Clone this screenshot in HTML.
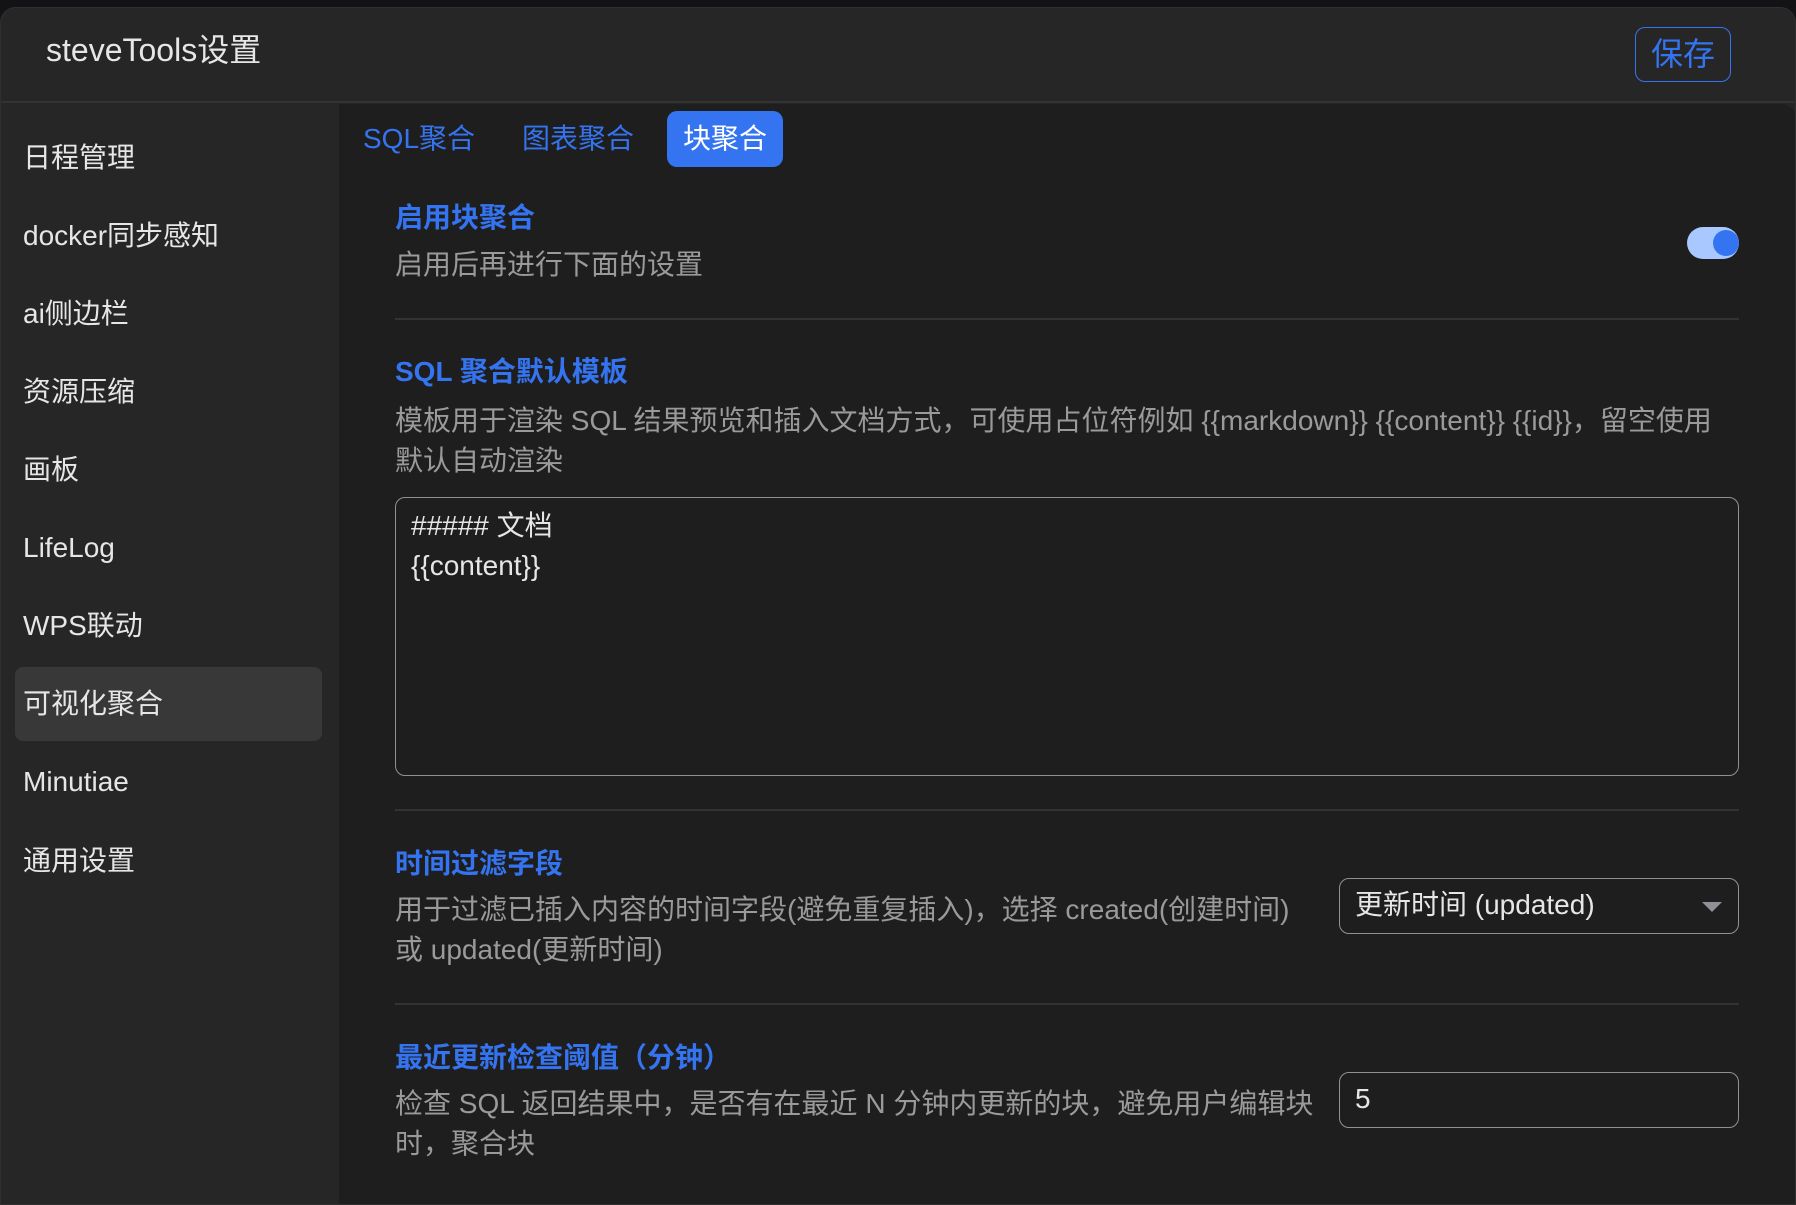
<!DOCTYPE html>
<html><head><meta charset="utf-8"><style>
*{box-sizing:border-box;margin:0;padding:0}
body{width:1796px;height:1205px;background:#131316;font-family:"Liberation Sans","Noto Sans CJK SC",sans-serif;overflow:hidden;position:relative}
.win{position:absolute;left:0;top:7px;width:1796px;height:1198px;background:#262626;border-radius:16px 16px 0 0;border:1px solid #303030;overflow:hidden}
.hdr{position:absolute;left:0;top:0;width:100%;height:95px;border-bottom:2px solid #333}
.title{position:absolute;left:45px;top:17px;font-size:32px;color:#e6e6e6}
.save{position:absolute;left:1634px;top:19px;width:96px;height:55px;border:1.5px solid #3574f0;border-radius:10px;color:#3574f0;font-size:32px;text-align:center;line-height:52px}
.side{position:absolute;left:0;top:96px;width:338px;height:1110px;background:#262626}
.item{position:absolute;left:22px;font-size:28px;color:#e6e6e6;height:40px;line-height:40px}
.act{position:absolute;left:14px;top:563px;width:307px;height:74px;background:#383838;border-radius:8px}
.main{position:absolute;left:338px;top:96px;width:1458px;height:1110px;background:#1e1e1e;border-radius:0 16px 0 0}
.tab{position:absolute;top:7px;height:56px;line-height:56px;font-size:28px;color:#3574f0}
.tab.on{background:#3574f0;color:#fff;border-radius:10px;padding:0 16px}
.h{position:absolute;left:56px;font-size:28px;font-weight:bold;color:#3574f0}
.d{position:absolute;left:56px;font-size:28px;color:#9a9a9a;line-height:40px;white-space:nowrap}
.hr{position:absolute;left:56px;width:1344px;height:2px;background:#333}
.box{position:absolute;border:1.5px solid #8e9296;border-radius:10px;color:#e6e6e6;font-size:28px}
</style></head><body>
<div class="win">
<div class="hdr"><div class="title">steveTools设置</div><div class="save">保存</div></div>
<div class="side">
<div class="act"></div>
<div class="item" style="top:34px">日程管理</div>
<div class="item" style="top:112px">docker同步感知</div>
<div class="item" style="top:190px">ai侧边栏</div>
<div class="item" style="top:268px">资源压缩</div>
<div class="item" style="top:346px">画板</div>
<div class="item" style="top:424px">LifeLog</div>
<div class="item" style="top:502px">WPS联动</div>
<div class="item" style="top:580px">可视化聚合</div>
<div class="item" style="top:658px">Minutiae</div>
<div class="item" style="top:737px">通用设置</div>
</div>
<div class="main">
<div class="tab" style="left:24px">SQL聚合</div>
<div class="tab" style="left:183px">图表聚合</div>
<div class="tab on" style="left:328px">块聚合</div>
<div class="h" style="top:92px">启用块聚合</div>
<div class="d" style="top:141px">启用后再进行下面的设置</div>
<div style="position:absolute;left:1348px;top:123px;width:52px;height:32px;border-radius:16px;background:#a8c8ff"></div>
<div style="position:absolute;left:1374px;top:126px;width:26px;height:26px;border-radius:50%;background:#3574f0"></div>
<div class="hr" style="top:214px"></div>
<div class="h" style="top:246px">SQL 聚合默认模板</div>
<div class="d" style="top:297px">模板用于渲染 SQL 结果预览和插入文档方式，可使用占位符例如 {{markdown}} {{content}} {{id}}，留空使用<br>默认自动渲染</div>
<div class="box" style="left:56px;top:393px;width:1344px;height:279px;padding:8px 15px;line-height:40px">##### 文档<br>{{content}}</div>
<div class="hr" style="top:705px"></div>
<div class="h" style="top:738px">时间过滤字段</div>
<div class="d" style="top:786px">用于过滤已插入内容的时间字段(避免重复插入)，选择 created(创建时间)<br>或 updated(更新时间)</div>
<div class="box" style="left:1000px;top:774px;width:400px;height:56px;padding:0 15px;line-height:52px">更新时间 (updated)
<div style="position:absolute;right:16px;top:23px;width:0;height:0;border-left:10px solid transparent;border-right:10px solid transparent;border-top:10px solid #8e9296"></div></div>
<div class="hr" style="top:899px"></div>
<div class="h" style="top:932px">最近更新检查阈值（分钟）</div>
<div class="d" style="top:980px">检查 SQL 返回结果中，是否有在最近 N 分钟内更新的块，避免用户编辑块<br>时，聚合块</div>
<div class="box" style="left:1000px;top:968px;width:400px;height:56px;padding:0 15px;line-height:52px">5</div>
</div>
</div>
</body></html>
